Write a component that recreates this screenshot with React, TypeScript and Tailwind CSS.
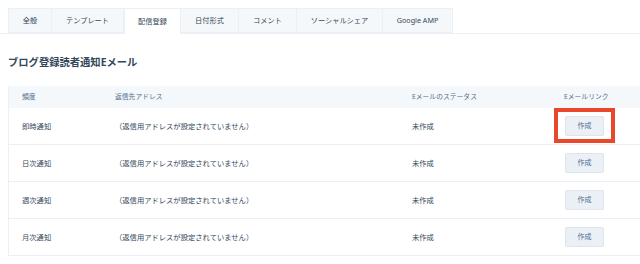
import React from "react";

const tabs = ["全般", "テンプレート", "配信登録", "日付形式", "コメント", "ソーシャルシェア", "Google AMP"];
const tabWidths = ["w-[44px]", "w-[72px]", "w-[57px]", "w-[58px]", "w-[58px]", "w-[86px]", "w-[70px]"];

const rows = ["即時通知", "日次通知", "週次通知", "月次通知"];

export default function App() {
  return (
    <div
      className="h-[264px] w-[640px] overflow-hidden bg-white text-[#33475b]"
      style={{ fontFamily: '"Noto Sans", "Noto Sans CJK JP", sans-serif' }}
    >
      <div className="pt-[8px]">
        <div className="flex border-b border-[#eaf0f6] pl-[8px]">
          {tabs.map((tab, i) => (
            <div
              key={tab}
              className={`flex h-[25px] items-center justify-center text-[7.2px] ${tabWidths[i]} ${
                i === 2
                  ? "-mb-px border-x border-t border-[#eaf0f6] bg-white h-[26px]"
                  : "border-y border-r border-[#eaf0f6] bg-[#f5f8fa] first:border-l"
              } ${i === 3 ? "border-l-0" : ""}`}
            >
              {tab}
            </div>
          ))}
        </div>
      </div>

      <h1 className="ml-[8px] mt-[21px] text-[10.3px] font-bold leading-[14px]">ブログ登録読者通知Eメール</h1>

      <div className="ml-[8px] mt-[17px] border-l border-b border-[#eaf0f6]">
        <div className="flex h-[22px] items-center bg-[#f5f8fa] text-[6.8px] text-[#516f90]">
          <div className="w-[93px] pl-[13px]">頻度</div>
          <div className="w-[297px] pl-[13px]">返信先アドレス</div>
          <div className="w-[153px] pl-[13px]">Eメールのステータス</div>
          <div className="flex-1 pl-[12px]">Eメールリンク</div>
        </div>
        {rows.map((row, i) => (
          <div
            key={row}
            className={`flex h-[36px] items-center text-[7.3px] ${i > 0 ? "box-content border-t border-[#eaf0f6]" : ""}`}
          >
            <div className="w-[93px] pl-[13px]">{row}</div>
            <div className="w-[297px] pl-[13px]">（返信用アドレスが設定されていません）</div>
            <div className="w-[153px] pl-[13px]">未作成</div>
            <div className="relative flex-1 pl-[13px]">
              <button className="flex h-[20px] w-[39px] items-center justify-center rounded-[2px] border border-[#dfe3eb] bg-[#eaf0f6] text-[7px] text-[#516f90]">
                作成
              </button>
              {i === 0 && (
                <div className="pointer-events-none absolute left-[2px] top-[-8px] h-[35px] w-[61px] border-[4px] border-[#e8472b]" />
              )}
            </div>
          </div>
        ))}
      </div>
    </div>
  );
}
